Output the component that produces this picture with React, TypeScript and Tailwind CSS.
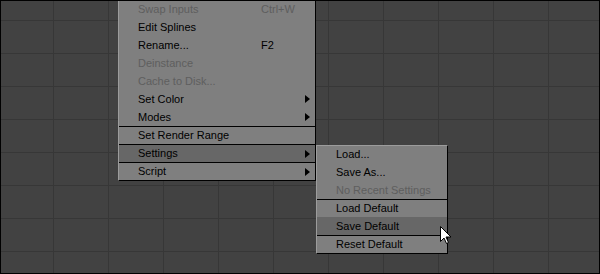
import React from "react";

type Item = {
    label: string;
    shortcut?: string;
    disabled?: boolean;
    arrow?: boolean;
    active?: boolean;
    divider?: boolean;
};

const mainItems: Item[] = [
    { label: "Swap Inputs", shortcut: "Ctrl+W", disabled: true },
    { label: "Edit Splines" },
    { label: "Rename...", shortcut: "F2" },
    { label: "Deinstance", disabled: true },
    { label: "Cache to Disk...", disabled: true },
    { label: "Set Color", arrow: true },
    { label: "Modes", arrow: true },
    { label: "Set Render Range", divider: true },
    { label: "Settings", arrow: true, active: true, divider: true },
    { label: "Script", arrow: true, divider: true },
];

const subItems: Item[] = [
    { label: "Load..." },
    { label: "Save As..." },
    { label: "No Recent Settings", disabled: true },
    { label: "Load Default", divider: true },
    { label: "Save Default", active: true },
    { label: "Reset Default", divider: true },
];

function Arrow() {
    return (
        <svg width="5" height="8" viewBox="0 0 5 8" className="absolute right-[5px] top-[5px]">
            <polygon points="0,0 5,4 0,8" fill="#000" />
        </svg>
    );
}

function Row({ item }: { item: Item }) {
    return (
        <div
            className={`relative flex h-[18px] items-center pl-[19px] ${item.divider ? "border-t border-black" : ""} ${
                item.active ? "bg-[#676767]" : ""
            } ${item.disabled ? "text-[#5e5e5e]" : "text-black"}`}
        >
            <span>{item.label}</span>
            {item.shortcut && <span className="absolute left-[142px]">{item.shortcut}</span>}
            {item.arrow && <Arrow />}
        </div>
    );
}

export default function App() {
    return (
        <div className="relative h-[274px] w-[600px] overflow-hidden border border-black bg-[#424242] bg-[linear-gradient(to_right,#373737_1px,transparent_1px),linear-gradient(to_bottom,#373737_1px,transparent_1px)] bg-[size:55px_33px] bg-[position:52px_19px] font-['Liberation_Sans',Arial,sans-serif] text-[11px] leading-none">
            <div className="absolute left-[117px] top-[-1px] w-[198px] border-b border-l border-r border-b-black border-l-[#9c9c9c] border-r-black bg-[#7f7f7f]">
                {mainItems.map((item) => (
                    <Row key={item.label} item={item} />
                ))}
            </div>
            <div className="absolute left-[315px] top-[144px] w-[132px] border border-t-[#9c9c9c] border-l-[#9c9c9c] border-b-black border-r-black bg-[#7f7f7f]">
                <div className="-mt-px">
                    {subItems.map((item) => (
                        <Row key={item.label} item={item} />
                    ))}
                </div>
            </div>
            <svg width="13" height="20" viewBox="0 0 13 20" className="absolute left-[439px] top-[225px]">
                <path d="M0.5 0.5 L0.5 15.5 L4 12 L6.5 17.5 L8.5 16.5 L6 11 L11 11 Z" fill="#fff" stroke="#000" strokeWidth="1" strokeLinejoin="miter" />
            </svg>
        </div>
    );
}
